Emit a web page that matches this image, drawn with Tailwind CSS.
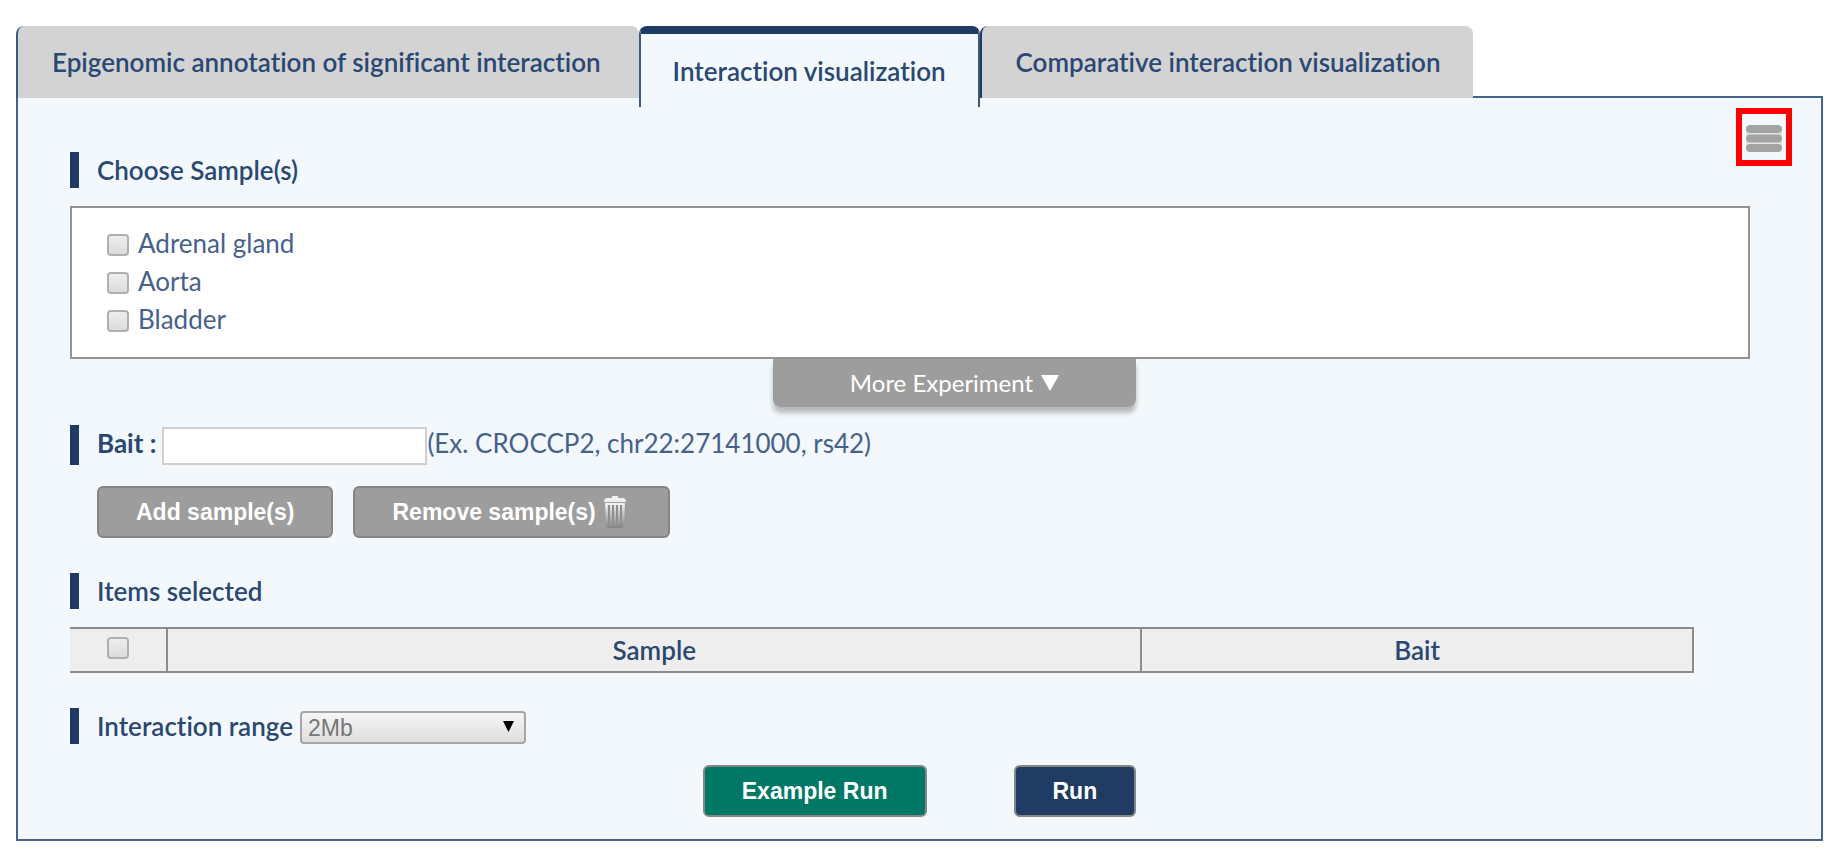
<!DOCTYPE html>
<html lang="en">
<head>
  <meta charset="UTF-8" />
  <title>Interaction visualization</title>
  <meta name="viewport" content="width=device-width, initial-scale=1.0" />
  <script src="https://cdn.jsdelivr.net/npm/@tailwindcss/browser@4"></script>
</head>
<body class="bg-white pt-[26px] pb-4 pl-4 pr-[19px] font-['Lato',sans-serif] text-[26px] leading-9 text-[#46618a] [font-variant-ligatures:none]">

  <!-- Tabs -->
  <nav class="relative z-10 flex h-[70px] items-start font-semibold text-[#2a4872]">
    <a href="#annotation" class="flex h-[72px] items-center whitespace-nowrap rounded-t-lg border-l-2 border-[#3b5a82] bg-[#d3d3d3] pl-[34px] pr-[38px]">Epigenomic annotation of significant interaction</a>
    <a href="#visualization" aria-current="page" class="flex h-[81px] items-center whitespace-nowrap rounded-t-lg border-x-2 border-t-8 border-x-[#3b5a82] border-t-[#1f3b64] bg-[#f2f8fb] px-8">Interaction visualization</a>
    <a href="#comparative" class="flex h-[72px] items-center whitespace-nowrap rounded-t-lg border-l-2 border-[#1f3b64] bg-[#d3d3d3] pl-[34px] pr-8">Comparative interaction visualization</a>
  </nav>

  <main class="relative border-2 border-[#46648b] bg-[#f2f8fb] pt-[54px] pb-[22px]">
    <button type="button" aria-label="Menu" class="absolute top-[10px] right-[29px] flex h-[58px] w-14 items-center justify-center border-6 border-[#ff0000] pt-[3px]">
      <svg class="h-7 w-9" viewBox="0 0 36 28" fill="#a3a3a3">
        <rect x="0" y="1" width="36" height="25" rx="4" fill="#dfe4e6" />
        <rect x="0" y="0" width="36" height="8" rx="4" />
        <rect x="0" y="9.500" width="36" height="8" rx="4" />
        <rect x="0" y="19" width="36" height="8" rx="4" />
      </svg>
    </button>

    <form class="pl-[52px] pr-[71px]">
      <h2 class="h-9 border-l-9 border-[#1f3b64] pl-[18px] font-semibold text-[#2a4872]">Choose Sample(s)</h2>

      <div class="mt-[18px] border-2 border-[#939393] bg-white pt-4 pb-[19px] pl-[35px]">
        <label class="flex h-[38px] items-center gap-[9px]">
          <input type="checkbox" class="mt-1 size-[22px] appearance-none rounded border-2 border-[#b0b0b0] bg-linear-to-b from-[#eeeeee] to-[#dcdcdc]" />
          Adrenal gland
        </label>
        <label class="flex h-[38px] items-center gap-[9px]">
          <input type="checkbox" class="mt-1 size-[22px] appearance-none rounded border-2 border-[#b0b0b0] bg-linear-to-b from-[#eeeeee] to-[#dcdcdc]" />
          Aorta
        </label>
        <label class="flex h-[38px] items-center gap-[9px]">
          <input type="checkbox" class="mt-1 size-[22px] appearance-none rounded border-2 border-[#b0b0b0] bg-linear-to-b from-[#eeeeee] to-[#dcdcdc]" />
          Bladder
        </label>
      </div>

      <div class="flex justify-center pl-[89px]">
        <button type="button" class="flex h-12 w-[363px] items-center justify-center gap-2 rounded-b-lg bg-[#9d9d9d] text-2xl text-white shadow-[0_6px_5px_rgba(0,0,0,0.25)]">
          More Experiment
          <svg class="h-4 w-[18px]" viewBox="0 0 18 16" fill="currentColor"><path d="M0 0h18L9 16z" /></svg>
        </button>
      </div>

      <div class="mt-[18px] flex h-10 items-start border-l-9 border-[#1f3b64] pl-[18px]">
        <label for="bait" class="font-bold text-[#2a4872]">Bait :</label>
        <input id="bait" type="text" class="mt-0.5 ml-1.5 h-[38px] w-[265px] border-2 border-[#cfcfcf] bg-white px-2" />
        <span>(Ex. CROCCP2, chr22:27141000, rs42)</span>
      </div>

      <div class="mt-[21px] flex gap-5 pl-[27px] font-['Liberation_Sans',sans-serif] text-[23px] font-bold text-white">
        <button type="button" class="h-[52px] rounded-md border-2 border-[#868686] bg-[#9d9d9d] px-[37px]">Add sample(s)</button>
        <button type="button" class="flex h-[52px] items-center gap-2 rounded-md border-2 border-[#868686] bg-[#9d9d9d] pl-[37px] pr-[42px]">
          Remove sample(s)
          <svg class="h-8 w-[22px]" viewBox="0 0 22 32">
            <defs>
              <linearGradient id="can" x1="0" y1="0" x2="0" y2="1">
                <stop offset="0" stop-color="#f4f4f4" />
                <stop offset="1" stop-color="#848484" />
              </linearGradient>
            </defs>
            <path fill="#f0f0f0" d="M8 0h6v2h5q3 0 3 4H0q0-4 3-4h5z" />
            <path fill="url(#can)" d="M1 7h20l-1 22q0 3-3 3H5q-3 0-3-3z" />
            <path stroke="#8f8f8f" stroke-width="2" d="M5 9v19M9 9v19M13 9v19M17 9v19" />
          </svg>
        </button>
      </div>

      <h2 class="mt-[35px] h-9 border-l-9 border-[#1f3b64] pl-[18px] font-semibold text-[#2a4872]">Items selected</h2>

      <div class="mt-[18px] pr-14">
        <table class="w-full table-fixed border-collapse border-y-2 border-r-2 border-[#8c8c8c] bg-[#eeeeee] text-[#2a4872]">
          <thead>
            <tr class="h-11">
              <th class="w-[6%] border-r-2 border-[#8c8c8c] p-0">
                <input type="checkbox" aria-label="Select all" class="mx-auto mb-1 block size-[22px] appearance-none rounded border-2 border-[#b0b0b0] bg-linear-to-b from-[#eeeeee] to-[#dcdcdc]" />
              </th>
              <th class="w-[60%] border-r-2 border-[#8c8c8c] p-0 font-semibold">Sample</th>
              <th class="w-[34%] p-0 font-semibold">Bait</th>
            </tr>
          </thead>
        </table>
      </div>

      <div class="mt-[35px] flex h-9 items-start border-l-9 border-[#1f3b64] pl-[18px]">
        <label for="range" class="font-semibold text-[#2a4872]">Interaction range</label>
        <div class="relative mt-[3px] ml-[7px] w-[226px]">
          <select id="range" class="block h-[33px] w-full appearance-none rounded-sm border-2 border-[#a6a6a6] bg-linear-to-b from-[#f6f6f6] to-[#dedede] px-1.5 font-['Liberation_Sans',sans-serif] text-[23px] leading-7 text-[#777777]">
            <option>2Mb</option>
          </select>
          <svg class="pointer-events-none absolute top-[10px] right-3 h-[11px] w-[11px]" viewBox="0 0 11 11"><path d="M0 0h11L5.500 11z" /></svg>
        </div>
      </div>
    </form>

    <div class="mt-[21px] flex justify-center gap-[87px] font-['Liberation_Sans',sans-serif] text-[23px] font-bold text-white">
      <button type="button" class="h-[52px] rounded-md border-2 border-[#868686] bg-[#007866] px-[37px]">Example Run</button>
      <button type="button" class="h-[52px] rounded-md border-2 border-[#868686] bg-[#213c63] px-[37px]">Run</button>
    </div>
  </main>
</body>
</html>
